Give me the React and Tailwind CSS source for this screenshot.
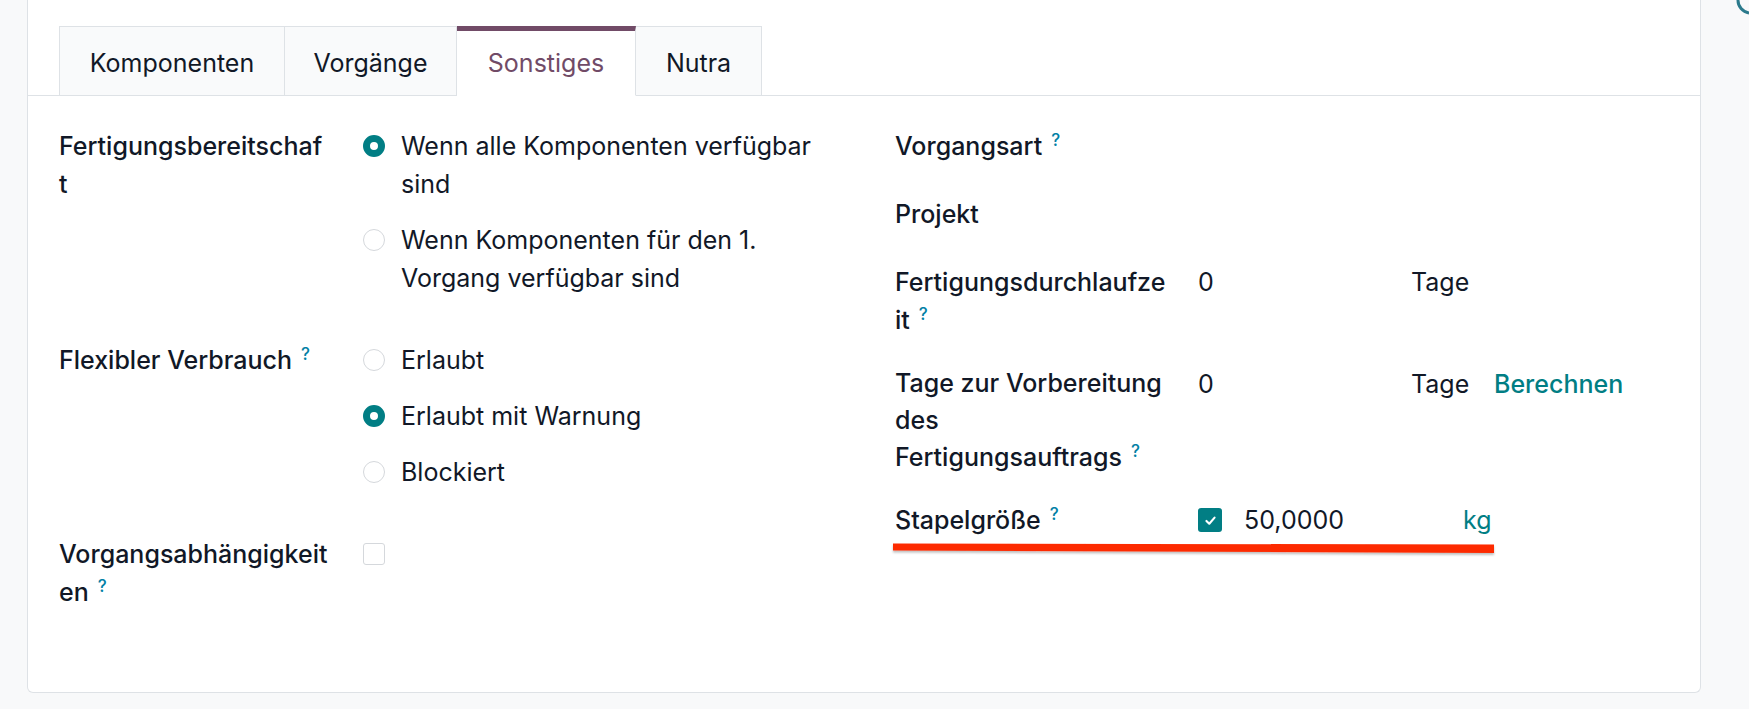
import React from 'react';

const Help = () => (
  <span className="relative top-[-9px] ml-[9px] text-[17px] leading-none font-medium text-[#0180a5]">?</span>
);

const Label = ({ lines, help }) => (
  <div className="font-medium">
    {lines.map((line, i) => (
      <div key={i} className="whitespace-nowrap">
        {line}
        {help && i === lines.length - 1 && <Help />}
      </div>
    ))}
  </div>
);

const Radio = ({ checked, lines }) => (
  <div className="flex items-start">
    <span
      className={
        checked
          ? 'mt-[8px] w-[22px] h-[22px] shrink-0 rounded-full border-[7px] border-[#017e84] bg-white'
          : 'mt-[8px] w-[22px] h-[22px] shrink-0 rounded-full border border-[#d5d8dc] bg-white'
      }
    />
    <div className="ml-[16px]">
      {lines.map((line, i) => (
        <div key={i} className="whitespace-nowrap">{line}</div>
      ))}
    </div>
  </div>
);

const tabs = [
  { name: 'Komponenten', w: 'w-[226px] border-l' },
  { name: 'Vorgänge', w: 'w-[172px]' },
  { name: 'Sonstiges', w: 'w-[179px]', active: true },
  { name: 'Nutra', w: 'w-[126px]' },
];

const App = () => {
  return (
    <div className="relative min-h-[709px] bg-[#f8f9fa] font-['Inter',sans-serif] text-[25px] leading-[38px] text-[#111827]">
      {/* partial element peeking in at the top right */}
      <svg className="absolute right-0 top-0" width="14" height="16" viewBox="0 0 14 16">
        <path d="M3 0 A 13 13 0 0 0 14 13" fill="none" stroke="#2b7a8c" strokeWidth="3" />
      </svg>

      <div className="ml-[27px] w-[1674px] h-[693px] bg-white border-x border-b border-[#dee2e6] rounded-b-[6px]">
        {/* tabs */}
        <div className="flex pt-[26px] pl-[31px] border-b border-[#dee2e6]">
          {tabs.map((t) => (
            <div
              key={t.name}
              className={
                t.active
                  ? `${t.w} h-[70px] -mb-px flex items-center justify-center border-r border-[#dee2e6] border-t-[5px] border-t-[#714b67] border-b border-b-white bg-white text-[#714b67]`
                  : `${t.w} h-[70px] -mb-px flex items-center justify-center pt-[3px] border-t border-r border-b border-[#dee2e6] bg-[#f9fafb]`
              }
            >
              {t.name}
            </div>
          ))}
        </div>

        {/* content */}
        <div className="grid grid-cols-[836px_1fr] pl-[31px] pt-[31px]">
          {/* left group */}
          <div className="flex flex-col">
            <div className="flex">
              <div className="w-[304px] shrink-0">
                <Label lines={['Fertigungsbereitschaf', 't']} />
              </div>
              <div className="flex flex-col gap-[18px]">
                <Radio checked lines={['Wenn alle Komponenten verfügbar', 'sind']} />
                <Radio lines={['Wenn Komponenten für den 1.', 'Vorgang verfügbar sind']} />
              </div>
            </div>

            <div className="flex mt-[44px]">
              <div className="w-[304px] shrink-0">
                <Label lines={['Flexibler Verbrauch']} help />
              </div>
              <div className="flex flex-col gap-[18px]">
                <Radio lines={['Erlaubt']} />
                <Radio checked lines={['Erlaubt mit Warnung']} />
                <Radio lines={['Blockiert']} />
              </div>
            </div>

            <div className="flex mt-[44px]">
              <div className="w-[304px] shrink-0">
                <Label lines={['Vorgangsabhängigkeit', 'en']} help />
              </div>
              <span className="mt-[8px] w-[22px] h-[22px] rounded-[3px] border border-[#d5d8dc] bg-white" />
            </div>
          </div>

          {/* right group */}
          <div className="flex flex-col">
            <div className="flex">
              <div className="w-[303px] shrink-0">
                <Label lines={['Vorgangsart']} help />
              </div>
            </div>

            <div className="flex mt-[30px]">
              <div className="w-[303px] shrink-0">
                <Label lines={['Projekt']} />
              </div>
            </div>

            <div className="flex mt-[30px]">
              <div className="w-[303px] shrink-0">
                <Label lines={['Fertigungsdurchlaufze', 'it']} help />
              </div>
              <div className="w-[213px] shrink-0">0</div>
              <div>Tage</div>
            </div>

            <div className="flex mt-[26px] leading-[37px]">
              <div className="w-[303px] shrink-0">
                <Label lines={['Tage zur Vorbereitung', 'des', 'Fertigungsauftrags']} help />
              </div>
              <div className="w-[213px] shrink-0 leading-[38px]">0</div>
              <div className="w-[83px] shrink-0 leading-[38px]">Tage</div>
              <div className="font-medium text-[#017e84] leading-[38px]">Berechnen</div>
            </div>

            <div className="relative flex mt-[25px]">
              <div className="w-[303px] shrink-0">
                <Label lines={['Stapelgröße']} help />
              </div>
              <span className="mt-[7px] w-[24px] h-[24px] shrink-0 rounded-[3px] bg-[#017e84] flex items-center justify-center">
                <svg width="13" height="13" viewBox="0 0 16 16">
                  <path d="M3 8.5 L6.5 12 L13 4.5" fill="none" stroke="white" strokeWidth="2.6" strokeLinecap="round" strokeLinejoin="round" />
                </svg>
              </span>
              <div className="ml-[22px] w-[219px] shrink-0">50,0000</div>
              <div className="text-[#017e84]">kg</div>

              {/* red hand-drawn underline annotation */}
              <svg className="absolute left-[-3px] top-[40px] overflow-visible" width="604" height="14" viewBox="0 0 604 14">
                <defs>
                  <filter id="sh" x="-5%" y="-100%" width="110%" height="300%">
                    <feDropShadow dx="0" dy="2" stdDeviation="1.2" floodColor="#000" floodOpacity="0.25" />
                  </filter>
                </defs>
                <polygon points="1,2.5 602,3.5 602,12 1,9.5" fill="#fd2a06" filter="url(#sh)" />
              </svg>
            </div>
          </div>
        </div>
      </div>
    </div>
  );
};

export default App;
